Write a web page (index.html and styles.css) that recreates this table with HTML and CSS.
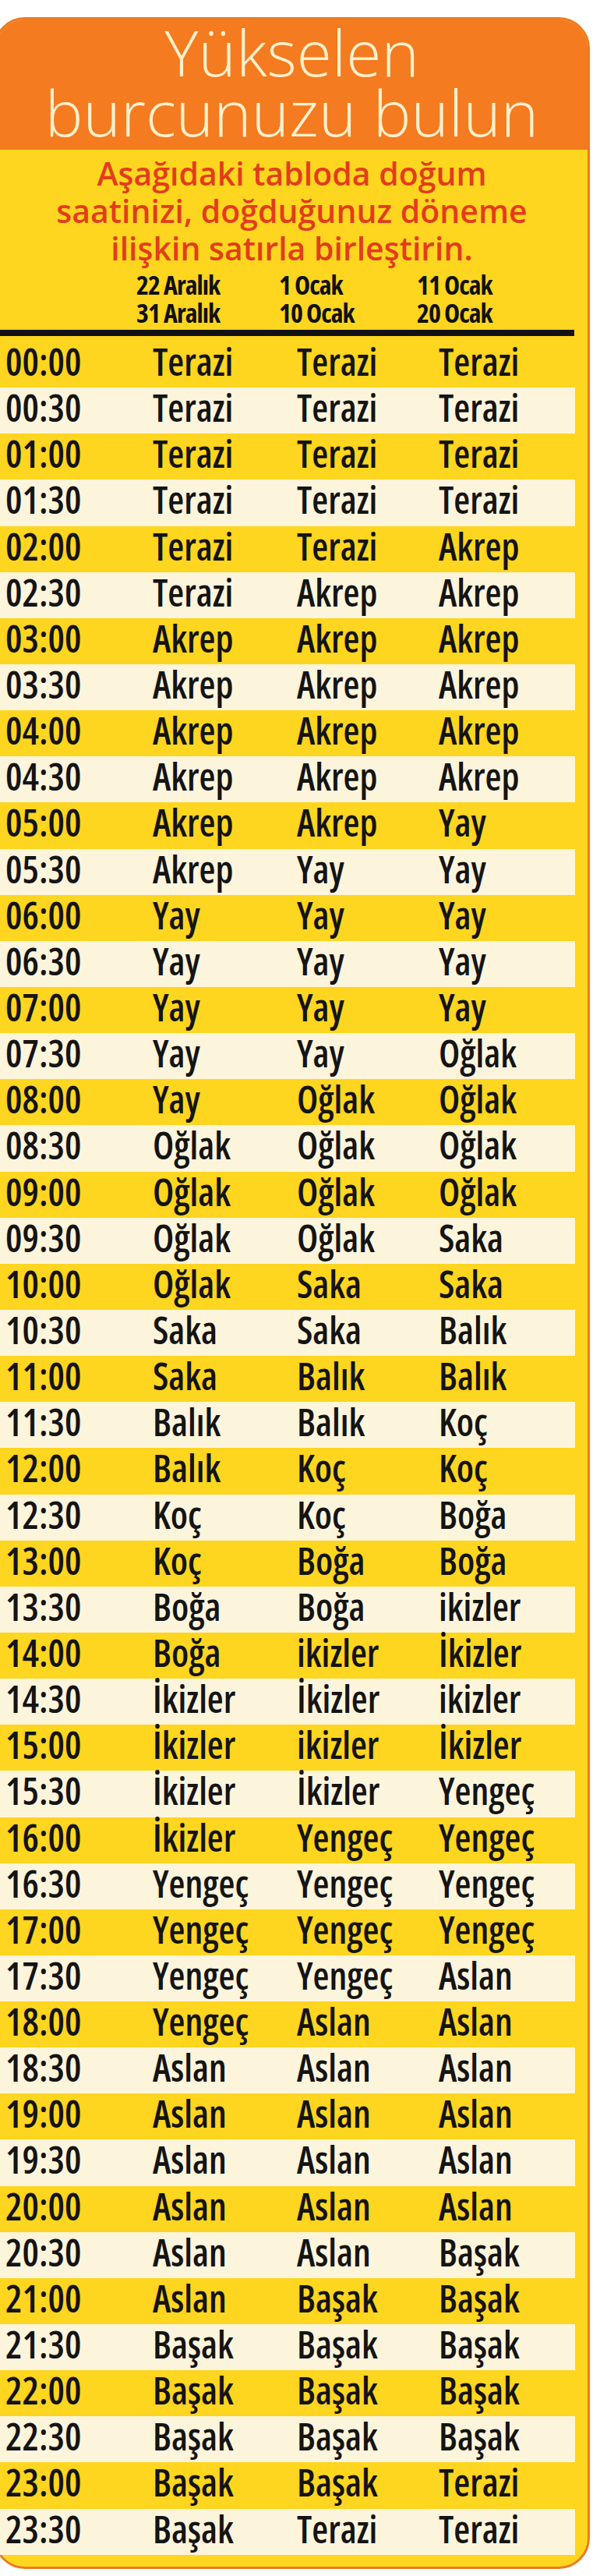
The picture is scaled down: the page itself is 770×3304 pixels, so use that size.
FILE: index.html
```html
<!DOCTYPE html>
<html lang="tr">
<head>
<meta charset="utf-8">
<title>Yükselen burcunuzu bulun</title>
<link rel="stylesheet" href="styles.css">
</head>
<body>
<div class="card">
  <header class="head">
    <h1 class="title"><span class="tline">Yükselen</span><span class="tline">burcunuzu bulun</span></h1>
  </header>
  <p class="intro">Aşağıdaki tabloda doğum<br>saatinizi, doğduğunuz döneme<br>ilişkin satırla birleştirin.</p>
  <div class="cols">
    <span></span>
    <span>22 Aralık<br>31 Aralık</span>
    <span>1 Ocak<br>10 Ocak</span>
    <span>11 Ocak<br>20 Ocak</span>
  </div>
  <div class="rule"></div>
  <div class="table">
    <div class="row"><span class="time">00:00</span><span>Terazi</span><span>Terazi</span><span>Terazi</span></div>
    <div class="row"><span class="time">00:30</span><span>Terazi</span><span>Terazi</span><span>Terazi</span></div>
    <div class="row"><span class="time">01:00</span><span>Terazi</span><span>Terazi</span><span>Terazi</span></div>
    <div class="row"><span class="time">01:30</span><span>Terazi</span><span>Terazi</span><span>Terazi</span></div>
    <div class="row"><span class="time">02:00</span><span>Terazi</span><span>Terazi</span><span>Akrep</span></div>
    <div class="row"><span class="time">02:30</span><span>Terazi</span><span>Akrep</span><span>Akrep</span></div>
    <div class="row"><span class="time">03:00</span><span>Akrep</span><span>Akrep</span><span>Akrep</span></div>
    <div class="row"><span class="time">03:30</span><span>Akrep</span><span>Akrep</span><span>Akrep</span></div>
    <div class="row"><span class="time">04:00</span><span>Akrep</span><span>Akrep</span><span>Akrep</span></div>
    <div class="row"><span class="time">04:30</span><span>Akrep</span><span>Akrep</span><span>Akrep</span></div>
    <div class="row"><span class="time">05:00</span><span>Akrep</span><span>Akrep</span><span>Yay</span></div>
    <div class="row"><span class="time">05:30</span><span>Akrep</span><span>Yay</span><span>Yay</span></div>
    <div class="row"><span class="time">06:00</span><span>Yay</span><span>Yay</span><span>Yay</span></div>
    <div class="row"><span class="time">06:30</span><span>Yay</span><span>Yay</span><span>Yay</span></div>
    <div class="row"><span class="time">07:00</span><span>Yay</span><span>Yay</span><span>Yay</span></div>
    <div class="row"><span class="time">07:30</span><span>Yay</span><span>Yay</span><span>Oğlak</span></div>
    <div class="row"><span class="time">08:00</span><span>Yay</span><span>Oğlak</span><span>Oğlak</span></div>
    <div class="row"><span class="time">08:30</span><span>Oğlak</span><span>Oğlak</span><span>Oğlak</span></div>
    <div class="row"><span class="time">09:00</span><span>Oğlak</span><span>Oğlak</span><span>Oğlak</span></div>
    <div class="row"><span class="time">09:30</span><span>Oğlak</span><span>Oğlak</span><span>Saka</span></div>
    <div class="row"><span class="time">10:00</span><span>Oğlak</span><span>Saka</span><span>Saka</span></div>
    <div class="row"><span class="time">10:30</span><span>Saka</span><span>Saka</span><span>Balık</span></div>
    <div class="row"><span class="time">11:00</span><span>Saka</span><span>Balık</span><span>Balık</span></div>
    <div class="row"><span class="time">11:30</span><span>Balık</span><span>Balık</span><span>Koç</span></div>
    <div class="row"><span class="time">12:00</span><span>Balık</span><span>Koç</span><span>Koç</span></div>
    <div class="row"><span class="time">12:30</span><span>Koç</span><span>Koç</span><span>Boğa</span></div>
    <div class="row"><span class="time">13:00</span><span>Koç</span><span>Boğa</span><span>Boğa</span></div>
    <div class="row"><span class="time">13:30</span><span>Boğa</span><span>Boğa</span><span>ikizler</span></div>
    <div class="row"><span class="time">14:00</span><span>Boğa</span><span>ikizler</span><span>İkizler</span></div>
    <div class="row"><span class="time">14:30</span><span>İkizler</span><span>İkizler</span><span>ikizler</span></div>
    <div class="row"><span class="time">15:00</span><span>İkizler</span><span>ikizler</span><span>İkizler</span></div>
    <div class="row"><span class="time">15:30</span><span>İkizler</span><span>İkizler</span><span>Yengeç</span></div>
    <div class="row"><span class="time">16:00</span><span>İkizler</span><span>Yengeç</span><span>Yengeç</span></div>
    <div class="row"><span class="time">16:30</span><span>Yengeç</span><span>Yengeç</span><span>Yengeç</span></div>
    <div class="row"><span class="time">17:00</span><span>Yengeç</span><span>Yengeç</span><span>Yengeç</span></div>
    <div class="row"><span class="time">17:30</span><span>Yengeç</span><span>Yengeç</span><span>Aslan</span></div>
    <div class="row"><span class="time">18:00</span><span>Yengeç</span><span>Aslan</span><span>Aslan</span></div>
    <div class="row"><span class="time">18:30</span><span>Aslan</span><span>Aslan</span><span>Aslan</span></div>
    <div class="row"><span class="time">19:00</span><span>Aslan</span><span>Aslan</span><span>Aslan</span></div>
    <div class="row"><span class="time">19:30</span><span>Aslan</span><span>Aslan</span><span>Aslan</span></div>
    <div class="row"><span class="time">20:00</span><span>Aslan</span><span>Aslan</span><span>Aslan</span></div>
    <div class="row"><span class="time">20:30</span><span>Aslan</span><span>Aslan</span><span>Başak</span></div>
    <div class="row"><span class="time">21:00</span><span>Aslan</span><span>Başak</span><span>Başak</span></div>
    <div class="row"><span class="time">21:30</span><span>Başak</span><span>Başak</span><span>Başak</span></div>
    <div class="row"><span class="time">22:00</span><span>Başak</span><span>Başak</span><span>Başak</span></div>
    <div class="row"><span class="time">22:30</span><span>Başak</span><span>Başak</span><span>Başak</span></div>
    <div class="row"><span class="time">23:00</span><span>Başak</span><span>Başak</span><span>Terazi</span></div>
    <div class="row"><span class="time">23:30</span><span>Başak</span><span>Terazi</span><span>Terazi</span></div>
  </div>
</div>
</body>
</html>
```

FILE: styles.css
```css
html, body {
  margin: 0;
  padding: 0;
  background: #ffffff;
}
body {
  height: 3304px;
  overflow: hidden;
  font-family: "Open Sans", "Noto Sans", "DejaVu Sans", sans-serif;
}
.card {
  box-sizing: border-box;
  width: 765px;
  margin: 22px 0 0 -8px;
  border: 3px solid #ec7a22;
  border-radius: 40px;
  background: #fed51f;
  padding-bottom: 15px;
}
.head {
  height: 167px;
  box-sizing: border-box;
  padding-top: 3px;
  background: #f47b20;
  border-radius: 37px 37px 0 0;
}
.title {
  margin: 0;
  text-align: center;
  color: #fdf0cc;
  font-weight: 300;
  font-size: 82px;
  line-height: 77px;
}
.tline {
  display: block;
  height: 77px;
}
.intro {
  margin: 6px 0 0;
  text-align: center;
  color: #e23d1b;
  font-weight: 600;
  font-size: 41px;
  line-height: 48px;
}
.cols {
  margin-top: 5px;
  display: grid;
  grid-template-columns: 180px 183px 177px 1fr;
  font-weight: 700;
  font-stretch: 85%;
  font-size: 34px;
  line-height: 36px;
  letter-spacing: -1px;
  color: #111;
}
.rule {
  margin: 4px 17px 0 0;
  height: 8px;
  background: #111;
}
.table {
  margin: 7px 16px 0 0;
}
.row {
  display: grid;
  grid-template-columns: 201px 185px 182px 1fr;
  height: 59.15px;
  box-sizing: border-box;
  line-height: 52px;
  font-weight: 600;
  font-stretch: 85%;
  font-size: 48px;
  color: #141414;
}
.row:nth-child(even) {
  background: #fdf4dc;
}
.time {
  padding-left: 12px;
}
```
